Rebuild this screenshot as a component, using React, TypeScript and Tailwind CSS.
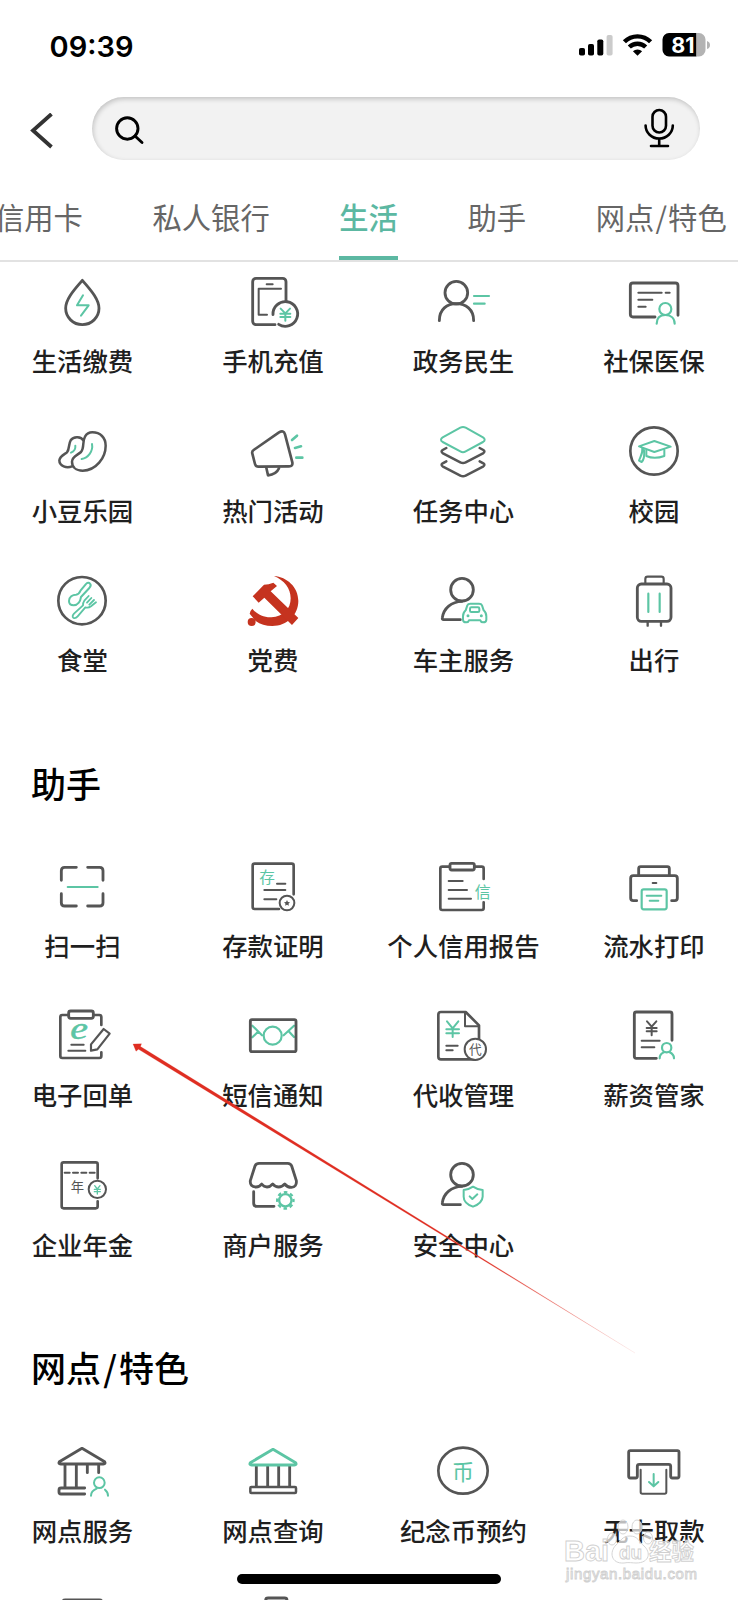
import type { ReactNode } from "react";
import { clsx } from "clsx";

const INK = "#555555";
const MINT = "#5cc5a4";
const CJK = "'Noto Sans CJK SC', sans-serif";

// Icons share a 180-unit box, drawn at 60px
function Icon({ children }: { children: ReactNode }) {
  return (
    <svg
      viewBox="0 0 180 180"
      className="h-[60px] w-[60px] overflow-visible"
      fill="none"
      stroke={INK}
      strokeWidth={8.5}
      strokeLinecap="round"
      strokeLinejoin="round"
    >
      {children}
    </svg>
  );
}

function Glyph({ x, y, size, color, children }: { x: number; y: number; size: number; color: string; children: string }) {
  return (
    <text x={x} y={y} fontSize={size} fill={color} stroke="none" textAnchor="middle" fontFamily={CJK}>
      {children}
    </text>
  );
}

const icons: Record<string, ReactNode> = {
  drop: (
    <>
      <path d="M91 25C75 45 41 78 41 109a50 49 0 0 0 100 0C141 78 107 45 91 25Z" />
      <path d="M93 70 75 100h35L87 131" stroke={MINT} strokeWidth={6} />
    </>
  ),
  phone: (
    <>
      <path d="M96 158H39a10 10 0 0 1-10-10V29a10 10 0 0 1 10-10h80a10 10 0 0 1 10 10v57" />
      <path d="M71 37h18M114 50H47v78h25" strokeWidth={6} />
      <path d="M90 128A37 37 0 1 1 107 157" />
      <path d="M113 110l14 14 14-14M127 124v22M112 125h30M112 135h30" stroke={MINT} strokeWidth={6} />
    </>
  ),
  civic: (
    <>
      <circle cx="70" cy="62" r="34" />
      <path d="M19 146C19 112 42 95 70 95s52 17 52 51" />
      <path d="M123 72h45M123 95h32" stroke={MINT} strokeWidth={6.5} />
    </>
  ),
  social: (
    <>
      <path d="M93 135H27q-8 0-8-8V41q0-8 8-8h127q8 0 8 8v89" />
      <path d="M43 62h70M125 62h12M43 83h42M43 104h22" strokeWidth={6} />
      <circle cx="124" cy="111" r="18" stroke={MINT} strokeWidth={6.5} />
      <path d="M98 155c0-17 10-26 26-26s28 9 28 26" stroke={MINT} strokeWidth={6.5} />
    </>
  ),
  beans: (
    <>
      <path d="M94 58C88 48 66 44 56 58c-7 12-3 26-11 36-7 6-21 10-23 24 0 18 22 24 38 18" strokeWidth={7.5} />
      <path d="M121 34c24 0 40 16 40 40 0 36-29 75-69 75-20 0-32-11-32-27 0-16 16-19 27-29 11-13 3-31 12-46 5-9 13-13 22-13Z" strokeWidth={7.5} />
      <path d="M120 69c4 22-12 42-31 45M70 74c1 10-5 18-13 21" stroke={MINT} strokeWidth={6} />
    </>
  ),
  megaphone: (
    <>
      <path d="M32 87 108 34q14-8 18 6l22 84q2 12-10 12l-92 1q-8 0-10-8l-8-31q-2-7 4-11Z" strokeWidth={8} />
      <path d="M70 140l5 23q25-2 33-21" strokeWidth={8} />
      <path d="M147 57l15-13M156 81l18-5M160 110h18" stroke={MINT} strokeWidth={8} />
    </>
  ),
  layers: (
    <>
      <path d="M82 20q8-4 16 0l52 29q10 7 0 14L98 91q-8 5-16 0L29 63q-10-7 0-14Z" stroke={MINT} strokeWidth={6} />
      <path d="M40 81l-11 6q-7 5 1 10l52 27q8 4 16 0l52-27q8-5 1-10l-11-6" strokeWidth={7.5} />
      <path d="M40 121l-11 6q-7 5 1 10l52 27q8 4 16 0l52-27q8-5 1-10l-11-6" strokeWidth={7.5} />
    </>
  ),
  campus: (
    <>
      <circle cx="90" cy="90" r="71" strokeWidth={8} />
      <g stroke={MINT} strokeWidth={6}>
        <path d="M45 76 91 60l49 17-49 16Z" />
        <path d="M67 88v17q24 11 54 0V87" />
        <path d="M55 81c2 16-6 26-10 38l8 4c6-6 9-18 7-36" />
      </g>
    </>
  ),
  canteen: (
    <>
      <circle cx="90" cy="89" r="71" strokeWidth={8} />
      <g stroke={MINT} strokeWidth={6}>
        <path d="M72 71Q81 70 86 58L101 40q8-8 13-2 5 4-2 13L87 78c-2 14-10 25-22 25-9 0-14-6-14-13 0-12 11-19 21-19Z" />
        <path d="M110 75 97 89q-5 7-4 14L66 128q-7 8-2 12 6 4 13-4l23-27q9 3 17-3l15-12M118 81l-13 14M126 87l-14 14" strokeWidth={5.5} />
      </g>
    </>
  ),
  party: (
    <g fill="#c5331f" stroke="none">
      <path d="M93 15C132 18 166 48 166 90c0 42-34 75-78 75-20 0-36-5-50-15L20 128q2-10 8-15c13 17 34 27 57 26 36-2 58-25 58-57 0-30-19-54-50-67Z" />
      <circle cx="26" cy="153" r="12" />
      <path d="M29 76 63 41q14 0 28-6l11 10-19 16 83 80-19 21-83-82-17 15Z" />
    </g>
  ),
  car: (
    <>
      <circle cx="87" cy="56" r="34" />
      <path d="M82 146H32q-5 0-4-6c4-28 27-48 59-49" />
      <g stroke={MINT} strokeWidth={6}>
        <path d="M103 103q2-5 9-5h26q7 0 9 5l5 15q8 7 8 18v10q0 8-10 8-6 0-8-6h-34q-2 6-8 6-10 0-10-8v-10q0-11 8-18Z" />
        <path d="M115 109h20q4 0 4 4v6q0 4-4 4h-20q-4 0-4-4v-6q0-4 4-4Z" />
        <circle cx="105" cy="134" r="2" strokeWidth={5} />
        <circle cx="145" cy="134" r="2" strokeWidth={5} />
      </g>
    </>
  ),
  travel: (
    <>
      <rect x="40" y="39" width="101" height="112" rx="12" />
      <path d="M64 37V24q0-7 7-7h41q7 0 7 7v13" strokeWidth={6.5} />
      <path d="M73 68v55M107 68v55" stroke={MINT} strokeWidth={6.5} />
      <path d="M71 154v10M111 154v10" strokeWidth={7} />
    </>
  ),
  scan: (
    <>
      <path d="M28 70V41q0-10 10-10h35M107 31h36q10 0 10 10v29M28 110v27q0 10 10 10h35M107 147h36q10 0 10-10v-27" />
      <path d="M47 90h90" stroke={MINT} strokeWidth={6} />
    </>
  ),
  deposit: (
    <>
      <path d="M108 156H35q-6 0-6-6V26q0-6 6-6h111q6 0 6 6v86" strokeWidth={8} />
      <Glyph x={72} y={77} size={47} color={MINT}>存</Glyph>
      <path d="M102 80h25M64 99h63M64 127h36" strokeWidth={6} />
      <circle cx="132" cy="138" r="22" strokeWidth={6} />
      <path d="M132 129l2.800 6 6.200.8-4.500 4.400 1.200 6.300-5.700-3-5.700 3 1.200-6.300-4.500-4.400 6.200-.8Z" fill={INK} stroke="none" />
    </>
  ),
  credit: (
    <>
      <path d="M50 29H28q-6 0-6 6v118q0 6 6 6h118q6 0 6-6v-17M125 29h21q6 0 6 6v31" strokeWidth={8} />
      <rect x="51" y="19" width="73" height="20" rx="5" />
      <path d="M47 72h42M47 99h55M47 125h67" strokeWidth={6} />
      <Glyph x={149} y={124} size={48} color={MINT}>信</Glyph>
    </>
  ),
  printer: (
    <>
      <path d="M44 55V35q0-6 6-6h80q6 0 6 6v20" />
      <path d="M38 131H28q-8 0-8-8V64q0-8 8-8h124q8 0 8 8v59q0 8-8 8h-9" />
      <path d="M86 78h11" strokeWidth={6} />
      <rect x="53" y="97" width="75" height="60" rx="6" stroke={MINT} strokeWidth={6.5} />
      <path d="M68 116h44M77 131h26" stroke={MINT} strokeWidth={6} />
    </>
  ),
  receipt: (
    <>
      <path d="M50 27H31q-6 0-6 6v117q0 6 6 6h111q6 0 6-6v-11M124 27h18q6 0 6 6v24" strokeWidth={8} />
      <rect x="50" y="15" width="74" height="22" rx="6" />
      <text
        x="0"
        y="0"
        transform="translate(81 98) scale(1.3 1)"
        fontSize="92"
        fontStyle="italic"
        fontFamily="'Liberation Serif', serif"
        textAnchor="middle"
        fill={MINT}
        stroke={MINT}
        strokeWidth={1.5}
      >
        e
      </text>
      <path d="M58 116h37M49 134h51" strokeWidth={6} />
      <path d="M155 69l18 14-37 47-19 4v-19Z" strokeWidth={6.5} />
    </>
  ),
  sms: (
    <>
      <path d="M28 59l29 29M45 77 28 94M153 59l-31 29M137 76l16 17" stroke={MINT} strokeWidth={6.5} />
      <circle cx="89" cy="89" r="27" stroke={MINT} strokeWidth={6.5} />
      <rect x="22" y="41" width="137" height="96" rx="5" />
    </>
  ),
  collect: (
    <>
      <path d="M138 98V58L98 18H24q-8 0-8 8v126q0 8 8 8h100" strokeWidth={8} />
      <path d="M96 22v39h40" strokeWidth={6} />
      <path d="M42 46l17 21 17-21M59 67v26M40 70h38M40 82h38" stroke={MINT} strokeWidth={6} />
      <path d="M40 119h34M40 133h19" strokeWidth={6} />
      <circle cx="127" cy="130" r="32" strokeWidth={6} fill="#fff" />
      <Glyph x={127} y={144} size={38} color={INK}>代</Glyph>
    </>
  ),
  salary: (
    <>
      <path d="M97 157H37q-6 0-6-6V24q0-6 6-6h101q6 0 6 6v79" />
      <path d="M69 46l14 16 14-16M83 62v26M68 66h30M68 76h30M53 104h54M53 124h38" strokeWidth={6} />
      <g stroke={MINT} strokeWidth={6.5}>
        <circle cx="128" cy="125" r="14" />
        <path d="M107 157c0-9 5-15 13-18M137 139c8 4 13 10 13 18" />
      </g>
    </>
  ),
  annuity: (
    <>
      <path d="M137 67V25q0-6-6-6H35q-6 0-6 6v126q0 6 6 6h96q6 0 6-6v-15" strokeWidth={8} />
      <path d="M38 50h92" strokeWidth={6} strokeDasharray="15 10" />
      <Glyph x={76} y={109} size={40} color={INK}>年</Glyph>
      <circle cx="136" cy="100" r="26" strokeWidth={6} />
      <path d="M128 89l8 10 8-10M136 99v15M127 100h18M127 107h18" stroke={MINT} strokeWidth={4} />
    </>
  ),
  merchant: (
    <>
      <path d="M48 22h86q9 0 12 8l14 44q2 19-15 20-12 0-20-10-8 9-18 9t-18-9q-8 9-17 9t-16-9q-6 9-17 9-19-1-17-19l14-44q3-8 12-8Z" />
      <path d="M32 107v35q0 9 9 9h52" />
      <circle cx="127" cy="133" r="18.500" stroke={MINT} strokeWidth={7} />
      <circle cx="127" cy="133" r="24.500" stroke={MINT} strokeWidth={7} strokeLinecap="butt" strokeDasharray="10.600 8.640" strokeDashoffset={5.3} />
    </>
  ),
  security: (
    <>
      <circle cx="87" cy="56" r="34" />
      <path d="M82 146H32q-5 0-4-6c4-28 27-48 59-49" />
      <path d="M120 92q13 9 29 10v20q-1 20-29 30-28-10-28-30v-20q15-1 28-10Z" stroke={MINT} strokeWidth={6} fill="#fff" />
      <path d="M110 121l8 8 15-14" stroke={MINT} strokeWidth={6} />
    </>
  ),
  branch: (
    <>
      <path d="M90 22l68 40q4 7-4 7H26q-8 0-4-7Z" />
      <path d="M39 70v70M73 70v70M106 70v25M140 70v25M98 141H27q-6 0-6 6v6q0 6 6 6h71" />
      <g stroke={MINT} strokeWidth={6}>
        <circle cx="142" cy="125" r="16" />
        <path d="M117 164c0-10 7-17 17-21M159 146c6 5 9 11 9 18" />
      </g>
    </>
  ),
  branchQuery: (
    <>
      <path d="M40 76v60M74 76v60M107 76v60M140 76v60" />
      <path d="M90 25l68 40q4 7-4 7H26q-8 0-4-7Z" stroke={MINT} />
      <rect x="22" y="138" width="137" height="18" rx="3" strokeWidth={7.5} />
    </>
  ),
  coin: (
    <>
      <ellipse cx="90" cy="89" rx="74" ry="69" strokeWidth={8} />
      <Glyph x={90} y={116} size={66} color={MINT}>币</Glyph>
    </>
  ),
  withdraw: (
    <>
      <path d="M19 29h141q5 0 5 5v72q0 5-5 5h-15q-5 0-5-5V76q0-6-6-6H46q-6 0-6 6v30q0 5-5 5H19q-5 0-5-5V34q0-5 5-5Z" />
      <path d="M50 86v67q0 5 5 5h67q5 0 5-5V86" strokeWidth={6} />
      <path d="M89 99v36M75 123l14 13 14-13" stroke={MINT} strokeWidth={6} />
    </>
  ),
  card: <rect x="32" y="27" width="118" height="124" rx="8" />,
  bag: <path d="M68 50V28q0-7 7-7h50q7 0 7 7v20" />,
};

type Entry = { icon: string; label: string };

const life: Entry[] = [
  { icon: "drop", label: "生活缴费" },
  { icon: "phone", label: "手机充值" },
  { icon: "civic", label: "政务民生" },
  { icon: "social", label: "社保医保" },
  { icon: "beans", label: "小豆乐园" },
  { icon: "megaphone", label: "热门活动" },
  { icon: "layers", label: "任务中心" },
  { icon: "campus", label: "校园" },
  { icon: "canteen", label: "食堂" },
  { icon: "party", label: "党费" },
  { icon: "car", label: "车主服务" },
  { icon: "travel", label: "出行" },
];

const assistant: Entry[] = [
  { icon: "scan", label: "扫一扫" },
  { icon: "deposit", label: "存款证明" },
  { icon: "credit", label: "个人信用报告" },
  { icon: "printer", label: "流水打印" },
  { icon: "receipt", label: "电子回单" },
  { icon: "sms", label: "短信通知" },
  { icon: "collect", label: "代收管理" },
  { icon: "salary", label: "薪资管家" },
  { icon: "annuity", label: "企业年金" },
  { icon: "merchant", label: "商户服务" },
  { icon: "security", label: "安全中心" },
];

const branches: Entry[] = [
  { icon: "branch", label: "网点服务" },
  { icon: "branchQuery", label: "网点查询" },
  { icon: "coin", label: "纪念币预约" },
  { icon: "withdraw", label: "无卡取款" },
  { icon: "card", label: "" },
  { icon: "bag", label: "" },
];

const tabs = ["信用卡", "私人银行", "生活", "助手", "网点/特色"];

function EntryGrid({ items }: { items: Entry[] }) {
  return (
    <div className="-ml-[12.8px] grid w-[762px] grid-cols-4 gap-y-[43.55px]">
      {items.map((item) => (
        <div key={item.icon} className="flex flex-col items-center gap-[10.2px]">
          <Icon>{icons[item.icon]}</Icon>
          <span className="h-9 whitespace-nowrap text-[25.4px] leading-9 font-medium text-[#1f1f1f]">{item.label}</span>
        </div>
      ))}
    </div>
  );
}

// The slash gets a little air on both sides
function Spaced({ text, className }: { text: string; className: string }) {
  const [left, right] = text.split("/");
  if (!right) return <>{text}</>;
  return (
    <>
      {left}
      <span className={className}>/</span>
      {right}
    </>
  );
}

function SectionTitle({ text }: { text: string }) {
  return (
    <h2 className="mt-[79.2px] mb-12 ml-[31px] h-[52px] text-[35px] leading-[52px] font-medium text-black">
      <Spaced text={text} className="mx-[2.2px]" />
    </h2>
  );
}

function StatusBar() {
  return (
    <div className="flex h-[90px] items-center justify-between pr-7 pl-[49.5px]">
      <span className="pt-[2px] font-['Inter'] text-[29px] leading-none font-semibold text-black">09:39</span>
      <svg width="132" height="26" viewBox="0 0 132 26" className="overflow-visible">
        <rect x="1" y="16" width="6" height="7.500" rx="1.800" />
        <rect x="10" y="12" width="6" height="11.500" rx="1.800" />
        <rect x="19.300" y="7.500" width="6" height="16" rx="1.800" />
        <rect x="28.600" y="3" width="6" height="20.500" rx="1.800" fill="#cbcbcb" />
        <g fill="none" stroke="#000" strokeWidth="4.400">
          <path d="M46.400 9.800a18.500 18.500 0 0 1 26.200 0" />
          <path d="M51.300 15a11.800 11.800 0 0 1 16.400 0" />
        </g>
        <path d="M59.500 23.800l-4.600-4.600a6.800 6.800 0 0 1 9.200 0Z" />
        <path d="M91 1H118.500V24.500H91a6.500 6.500 0 0 1-6.500-6.500V7.500A6.500 6.500 0 0 1 91 1Z" />
        <path d="M118.500 1H121a6.500 6.500 0 0 1 6.500 6.500V18a6.500 6.500 0 0 1-6.500 6.500h-2.500Z" fill="#b3b3b3" />
        <path d="M129 9q3 1 3 4t-3 4Z" fill="#b3b3b3" />
        <text x="105" y="20.500" fontSize="21.500" fontWeight="700" fontFamily="Inter, sans-serif" textAnchor="middle" fill="#fff">
          81
        </text>
      </svg>
    </div>
  );
}

function SearchBar() {
  return (
    <div className="flex items-center pt-[6.5px] pl-[29px]">
      <svg width="24" height="36" viewBox="0 0 24 36" fill="none" stroke="#333" strokeWidth="3.800" className="mt-[5px]">
        <path d="M22.500 1 4 17.500 22.500 34" />
      </svg>
      <div className="ml-[39px] flex h-[63px] w-[608px] items-center justify-between rounded-full bg-[#f2f2f2] pr-[25px] pl-[22px] shadow-[inset_1px_2px_5px_rgba(0,0,0,0.2)]">
        <svg width="30" height="30" viewBox="0 0 30 30" fill="none" stroke="#000" strokeWidth="2.900" strokeLinecap="round" className="overflow-visible">
          <circle cx="13.300" cy="15.500" r="10.700" />
          <path d="M21 23l7 6.500" />
        </svg>
        <svg width="32" height="40" viewBox="0 0 32 40" fill="none" stroke="#000" strokeWidth="2.600" strokeLinecap="round">
          <rect x="9.500" y="2" width="13.500" height="22.500" rx="6.750" />
          <path d="M2.600 17.500a13.600 13 0 0 0 27.200 0M16.200 30.500v7.500M8 38h17" />
        </svg>
      </div>
    </div>
  );
}

// Faint site watermark over the bottom right corner
function Watermark() {
  return (
    <svg className="absolute right-0 bottom-0" width="188" height="100" viewBox="0 0 188 100">
      <g fill="#fff" fillOpacity="0.7" stroke="#d0d0d0" strokeWidth="0.900">
        <ellipse cx="73" cy="27" rx="5" ry="7" />
        <ellipse cx="87" cy="27" rx="5" ry="7" />
        <ellipse cx="62" cy="39" rx="4.500" ry="6" />
        <ellipse cx="98" cy="38" rx="4.500" ry="6" />
        <path d="M80 36c8 0 9 6 14 10 7 6 6 17-8 17-3 0-8-1-12 0-13 1-15-11-8-18 5-4 6-9 14-9Z" />
        <text x="14" y="61" fontSize="29" fontWeight="700" fontFamily="'Liberation Sans', sans-serif">Bai</text>
        <text x="69" y="59" fontSize="19" fontWeight="700" fontFamily="'Liberation Sans', sans-serif">du</text>
        <text x="99" y="60" fontSize="22.500" fontWeight="700" fontFamily={CJK}>经验</text>
        <text x="16" y="79" fontSize="15" strokeWidth="0.900" fontFamily="'Liberation Sans', sans-serif" textLength="131">
          jingyan.baidu.com
        </text>
      </g>
    </svg>
  );
}

// Tapered red pointer towards 电子回单
function Pointer() {
  return (
    <svg className="absolute top-0 left-0" width="738" height="1600" viewBox="0 0 738 1600">
      <defs>
        <linearGradient id="pointer" gradientUnits="userSpaceOnUse" x1="133" y1="1044" x2="635" y2="1353">
          <stop offset="0.700" stopColor="#df2e22" />
          <stop offset="1" stopColor="#df2e22" stopOpacity="0.200" />
        </linearGradient>
      </defs>
      <path d="M133 1044l8.500-.2-1 2.700L635 1353 138.500 1049.300l-2.500 2Z" fill="url(#pointer)" stroke="url(#pointer)" strokeWidth="0.200" />
    </svg>
  );
}

export default function App() {
  return (
    <div className="relative h-[1600px] w-[738px] overflow-hidden bg-white font-['Noto_Sans_CJK_SC',sans-serif]">
      <StatusBar />
      <SearchBar />
      <nav className="mt-[28.5px] flex h-[74px] gap-[69.6px] border-b-2 border-[#e2e2e2] pl-[2px]">
        {tabs.map((tab, i) => (
          <span
            key={tab}
            className={clsx(
              "h-[72px] shrink-0 whitespace-nowrap border-b-4 text-[29.3px] leading-[56px]",
              i === 0 && "-ml-[7px]",
              tab === "生活" ? "border-[#5cb8a2] font-medium text-[#5cb8a2]" : "border-transparent text-[#666]"
            )}
          >
            <Spaced text={tab} className="mx-[1.2px]" />
          </span>
        ))}
      </nav>
      <main className="pt-[9.7px]">
        <EntryGrid items={life} />
        <SectionTitle text="助手" />
        <EntryGrid items={assistant} />
        <SectionTitle text="网点/特色" />
        <EntryGrid items={branches} />
      </main>
      <Pointer />
      <Watermark />
      <div className="absolute bottom-4 left-[237px] h-[10px] w-[264px] rounded-full bg-black" />
    </div>
  );
}
